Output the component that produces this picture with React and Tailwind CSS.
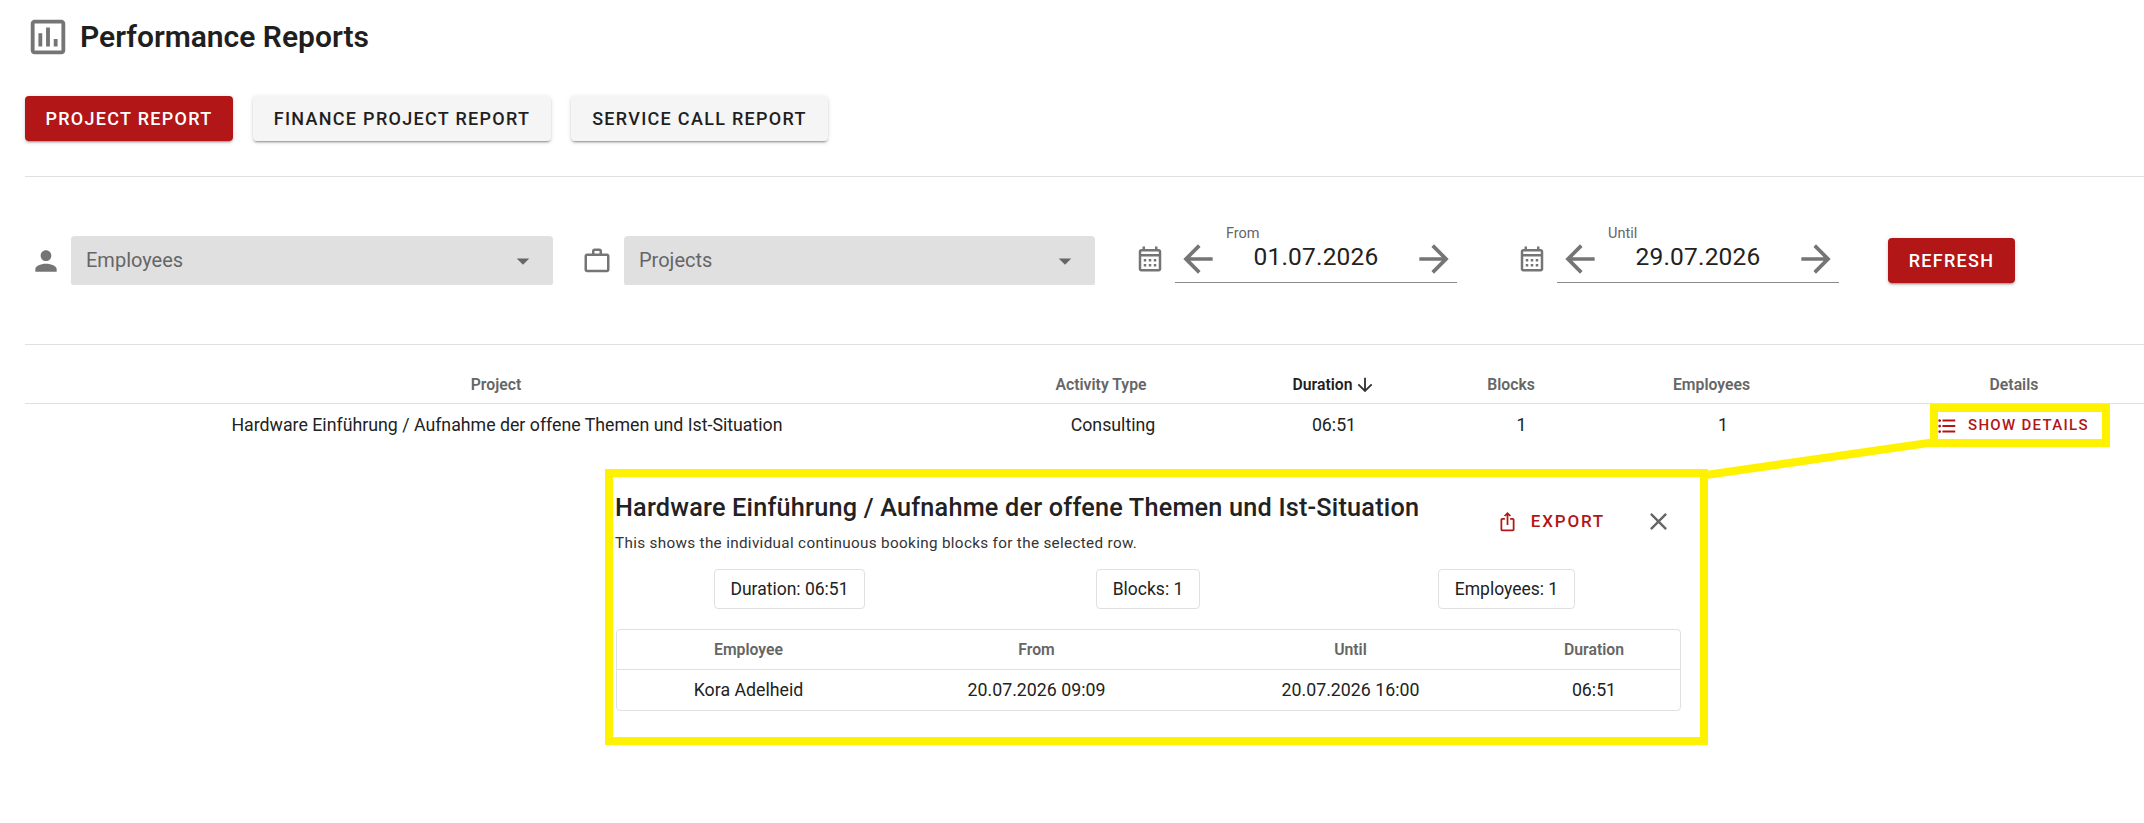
const P = ({ d, size, className = "" }) => (
  <svg viewBox="0 0 24 24" width={size} height={size} className={"shrink-0 fill-current " + className}>
    <path d={d} />
  </svg>
);
const ic = {
  report: "M9 17H7v-7h2v7zm4 0h-2V7h2v10zm4 0h-2v-4h2v4zm2 2H5V5h14v14zm0-16H5c-1.1 0-2 .9-2 2v14c0 1.1.9 2 2 2h14c1.1 0 2-.9 2-2V5c0-1.1-.9-2-2-2z",
  person: "M12 12c2.21 0 4-1.79 4-4s-1.79-4-4-4-4 1.79-4 4 1.79 4 4 4zm0 2c-2.67 0-8 1.34-8 4v2h16v-2c0-2.66-5.33-4-8-4z",
  work: "M14 6V4h-4v2h4zM4 8v11h16V8H4zm16-2c1.11 0 2 .89 2 2v11c0 1.11-.89 2-2 2H4c-1.11 0-2-.89-2-2l.01-11c0-1.11.88-2 1.99-2h4V4c0-1.11.89-2 2-2h4c1.11 0 2 .89 2 2v2h4z",
  cal: "M19 4h-1V2h-2v2H8V2H6v2H5c-1.11 0-1.99.9-1.99 2L3 20c0 1.1.89 2 2 2h14c1.1 0 2-.9 2-2V6c0-1.1-.9-2-2-2zm0 16H5V10h14v10zm0-12H5V6h14v2zM9 14H7v-2h2v2zm4 0h-2v-2h2v2zm4 0h-2v-2h2v2zm-8 4H7v-2h2v2zm4 0h-2v-2h2v2zm4 0h-2v-2h2v2z",
  back: "M20 11H7.83l5.59-5.59L12 4l-8 8 8 8 1.41-1.41L7.83 13H20v-2z",
  fwd: "M12 4l-1.41 1.41L16.17 11H4v2h12.17l-5.58 5.59L12 20l8-8z",
  drop: "M7 10l5 5 5-5z",
  down: "M20 12l-1.41-1.41L13 16.17V4h-2v12.17l-5.58-5.59L4 12l8 8 8-8z",
  list: "M4 10.5c-.83 0-1.5.67-1.5 1.5s.67 1.5 1.5 1.5 1.5-.67 1.5-1.5-.67-1.5-1.5-1.5zm0-6c-.83 0-1.5.67-1.5 1.5S3.17 7.5 4 7.5 5.5 6.83 5.5 6 4.83 4.5 4 4.5zm0 12c-.83 0-1.5.68-1.5 1.5s.68 1.5 1.5 1.5 1.5-.68 1.5-1.5-.67-1.5-1.5-1.5zM7 19h14v-2H7v2zm0-6h14v-2H7v2zm0-8v2h14V5H7z",
  share: "M16 5l-1.42 1.42-1.59-1.59V16h-1.98V4.83L9.42 6.42 8 5l4-4 4 4zm4 5v11c0 1.1-.9 2-2 2H6c-1.11 0-2-.9-2-2V10c0-1.11.89-2 2-2h3v2H6v11h12V10h-3V8h3c1.1 0 2 .89 2 2z",
  close: "M19 6.41L17.59 5 12 10.59 6.41 5 5 6.41 10.59 12 5 17.59 6.41 19 12 13.41 17.59 19 19 17.59 13.41 12z",
};

const shadow = "shadow-[0_3px_1px_-2px_rgba(0,0,0,0.2),0_2px_2px_0_rgba(0,0,0,0.14),0_1px_5px_0_rgba(0,0,0,0.12)]";

function Btn({ children, active, className = "" }) {
  return (
    <div className={`h-[45px] flex items-center justify-center rounded-[4px] text-[18px] font-medium tracking-[1.3px] ${shadow} ${active ? "bg-[#b21616] text-white" : "bg-[#f5f5f5] text-[#1f1f1f]"} ${className}`}>
      {children}
    </div>
  );
}

function Select({ label, className }) {
  return (
    <div className={`h-[49px] bg-[#e0e0e0] rounded-t-[4px] rounded-b-[2px] flex items-center justify-between pl-[15px] pr-[18px] text-[20px] text-[#666] ${className}`}>
      <span className="-mt-[1px]">{label}</span>
      <P d={ic.drop} size={30} className="text-[#666] -mr-[3px]" />
    </div>
  );
}

function DateField({ label, value }) {
  return (
    <div className="flex items-center mb-[15px]">
      <P d={ic.cal} size={30} className="text-[#757575] mt-[11px]" />
      <div className="ml-[10px] w-[282px] h-[60px] border-b border-[#8a8a8a] relative flex items-end justify-between pb-[1px] px-[1px]">
        <span className="absolute top-0 left-[51px] text-[14.5px] text-[#666]">{label}</span>
        <P d={ic.back} size={44} className="text-[#757575]" />
        <span className="text-[24.5px] text-[#222] mb-[5px] tracking-[0.2px]">{value}</span>
        <P d={ic.fwd} size={44} className="text-[#757575]" />
      </div>
    </div>
  );
}

const Chip = ({ children, className = "" }) => (
  <div className={`h-[40px] flex items-center justify-center border border-[#e0e0e0] rounded-[4px] text-[17.5px] text-[#222] ${className}`}>
    {children}
  </div>
);

const Head = ({ children, className = "" }) => (
  <div className={`flex items-center justify-center text-[15.75px] font-semibold text-[#666] ${className}`}>{children}</div>
);
const Cell = ({ children, className = "" }) => (
  <div className={`flex items-center justify-center text-[17.75px] text-[#222] ${className}`}>{children}</div>
);

export default function App() {
  return (
    <div className="relative w-[2144px] h-[823px] overflow-hidden bg-white font-['Roboto',sans-serif] pl-[25px]">
      {/* title */}
      <div className="h-[75px] flex items-center pb-[2px]">
        <P d={ic.report} size={46} className="text-[#757575]" />
        <h1 className="ml-[9px] text-[30px] font-semibold text-[#1f1f1f]">Performance Reports</h1>
      </div>

      {/* tabs */}
      <div className="mt-[21px] flex gap-[20px]">
        <Btn active className="w-[208px]">PROJECT REPORT</Btn>
        <Btn className="w-[298px]">FINANCE PROJECT REPORT</Btn>
        <Btn className="w-[257px]">SERVICE CALL REPORT</Btn>
      </div>
      <div className="mt-[35px] h-[1px] bg-[#e0e0e0]" />

      {/* filters */}
      <div className="mt-[59px] h-[49px] flex items-center">
        <P d={ic.person} size={32} className="text-[#757575] ml-[5px]" />
        <Select label="Employees" className="ml-[9px] w-[482px]" />
        <P d={ic.work} size={30} className="text-[#757575] ml-[29px]" />
        <Select label="Projects" className="ml-[12px] w-[471px]" />
        <div className="ml-[40px]"><DateField label="From" value="01.07.2026" /></div>
        <div className="ml-[60px]"><DateField label="Until" value="29.07.2026" /></div>
        <Btn active className="ml-[49px] w-[127px]">REFRESH</Btn>
      </div>
      <div className="mt-[59px] h-[1px] bg-[#e0e0e0]" />

      {/* table */}
      <div className="h-[59px] flex border-b border-[#e0e0e0] pt-[21px]">
        <Head className="w-[964px] pr-[22px]">Project</Head>
        <Head className="w-[248px] pr-[24px]">Activity Type</Head>
        <Head className="w-[194px] !text-[#1f1f1f]">
          Duration
          <P d={ic.down} size={22} className="ml-[1px] text-[#333]" />
        </Head>
        <Head className="w-[181px] pr-[21px]">Blocks</Head>
        <Head className="w-[222px] pr-[23px]">Employees</Head>
        <Head className="ml-[50px] w-[260px]">Details</Head>
      </div>
      <div className="h-[43px] flex">
        <Cell className="w-[964px]">Hardware Einführung / Aufnahme der offene Themen und Ist-Situation</Cell>
        <Cell className="w-[248px]">Consulting</Cell>
        <Cell className="w-[194px]">06:51</Cell>
        <Cell className="w-[181px]">1</Cell>
        <Cell className="w-[222px]">1</Cell>
        <div className="ml-[102px] flex items-center text-[#b21616] text-[15px] font-medium tracking-[1.3px]">
          <P d={ic.list} size={22} className="mr-[10px]" />
          SHOW DETAILS
        </div>
      </div>

      {/* detail dialog */}
      <div className="ml-[591px] mt-[45px] w-[1065px]">
        <div className="flex items-start justify-between">
          <div className="-ml-[1px]">
            <h2 className="text-[25.25px] font-medium text-[#222] tracking-[0.2px] leading-[32px]">Hardware Einführung / Aufnahme der offene Themen und Ist-Situation</h2>
            <p className="mt-[9px] text-[15.25px] text-[#333] tracking-[0.33px] leading-[20px]">This shows the individual continuous booking blocks for the selected row.</p>
          </div>
          <div className="flex items-center pt-[15px] mr-[8px] text-[#b21616]">
            <P d={ic.share} size={21} />
            <span className="ml-[13px] text-[17px] font-medium tracking-[1.8px]">EXPORT</span>
            <P d={ic.close} size={29} className="ml-[39px] text-[#666]" />
          </div>
        </div>
        <div className="mt-[16px] h-[40px] flex">
          <Chip className="ml-[98px] w-[151px]">Duration: 06:51</Chip>
          <Chip className="ml-[231px] w-[104px]">Blocks: 1</Chip>
          <Chip className="ml-[238px] w-[137px]">Employees: 1</Chip>
        </div>
        <div className="mt-[20px] border border-[#e0e0e0] rounded-[4px]">
          <div className="h-[40px] grid grid-cols-[263px_313px_315px_1fr] border-b border-[#e0e0e0]">
            <Head>Employee</Head><Head>From</Head><Head>Until</Head><Head>Duration</Head>
          </div>
          <div className="h-[40px] grid grid-cols-[263px_313px_315px_1fr]">
            <Cell>Kora Adelheid</Cell><Cell>20.07.2026 09:09</Cell><Cell>20.07.2026 16:00</Cell><Cell>06:51</Cell>
          </div>
        </div>
      </div>

      {/* yellow annotation */}
      <div className="absolute left-[605px] top-[469px] w-[1103px] h-[276px] border-[8px] border-[#fff200]" />
      <div className="absolute left-[1930px] top-[404px] w-[180px] h-[43px] border-[8px] border-[#fff200]" />
      <svg className="absolute left-0 top-0 pointer-events-none" width="2144" height="823">
        <line x1="1706" y1="475" x2="1932" y2="442.5" stroke="#fff200" strokeWidth="8" />
      </svg>
    </div>
  );
}
